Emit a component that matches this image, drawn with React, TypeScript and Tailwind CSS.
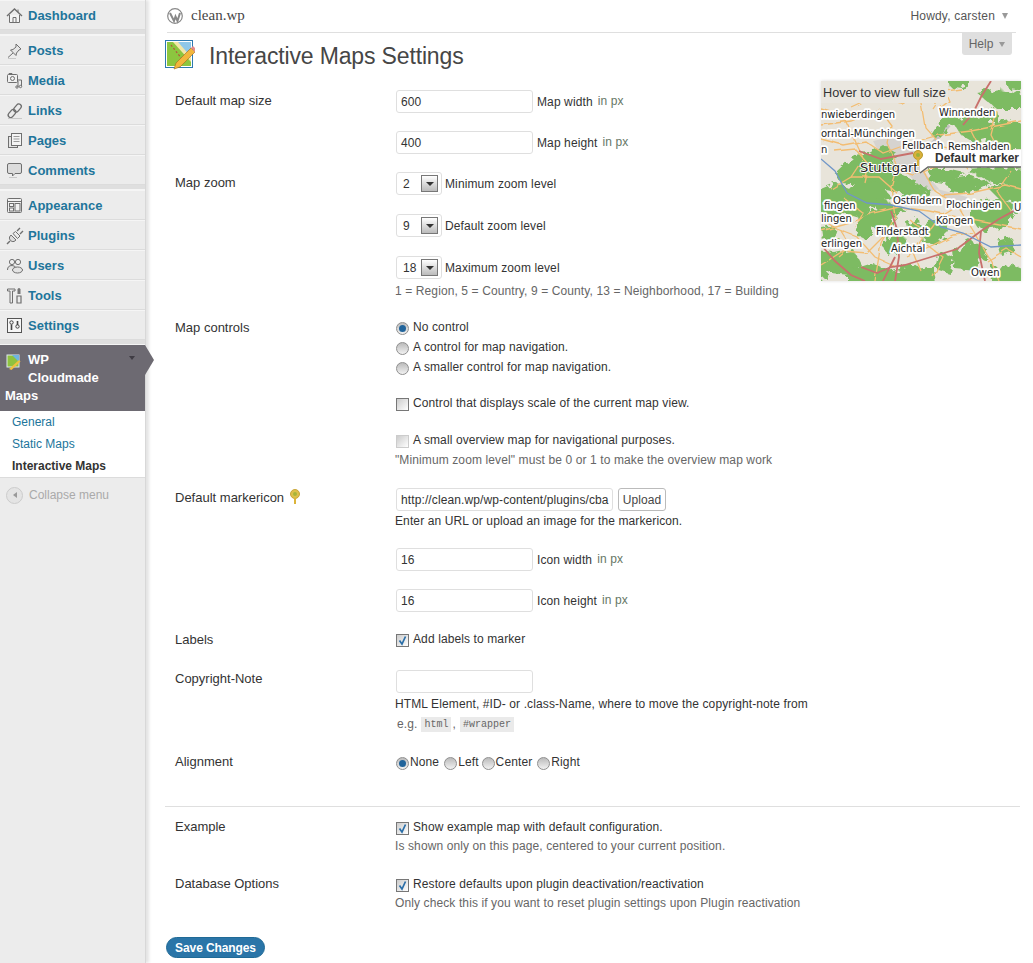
import React from 'react';

const S = { fill: 'none', stroke: '#6f6f6f', strokeWidth: 1 };

const icons: Record<string, React.ReactNode> = {
  Dashboard: (
    <>
      <path d="M1 9 L8.5 2 L16 9" {...S} strokeWidth={1.4} />
      <path d="M3.5 8 V15.5 H13.5 V8" {...S} fill="#f4f4f4" />
      <path d="M7 15.5 V10.5 H10 V15.5" {...S} />
      <path d="M12 2.5 V5" {...S} />
    </>
  ),
  Posts: (
    <>
      <path d="M10 2 L15 7 L13 8 L10.5 11 L10 13.5 L4.5 8 L7 7.5 L10 5Z" {...S} fill="#e6e6e6" />
      <path d="M7 11 L2 15.5" {...S} />
      <path d="M2 16.5 H10" stroke="#c8c8c8" fill="none" />
    </>
  ),
  Media: (
    <>
      <rect x="1.5" y="2.5" width="10" height="8" rx="1" {...S} fill="#f0f0f0" />
      <circle cx="6.5" cy="6.5" r="2" {...S} />
      <path d="M3 2.5 V1.5 H6 V2.5" {...S} />
      <path d="M12 8 H15.5 V14 M12 9 V15" {...S} />
      <circle cx="11" cy="15" r="1.2" {...S} />
      <circle cx="14.5" cy="14.5" r="1.2" {...S} />
    </>
  ),
  Links: (
    <>
      <rect x="9" y="1.5" width="5" height="9" rx="2.5" transform="rotate(40 11.5 6)" {...S} strokeWidth={1.3} />
      <rect x="3.5" y="7" width="5" height="9" rx="2.5" transform="rotate(40 6 11.5)" {...S} strokeWidth={1.3} />
      <path d="M2 16.5 H16" stroke="#c8c8c8" fill="none" />
    </>
  ),
  Pages: (
    <>
      <rect x="2.5" y="4.5" width="9" height="11" {...S} fill="#e4e4e4" />
      <rect x="5.5" y="1.5" width="10" height="12" {...S} fill="#f4f4f4" />
      <path d="M7.5 4.5 H13.5 M7.5 7 H13.5 M7.5 9.5 H13.5" stroke="#9a9a9a" fill="none" />
    </>
  ),
  Comments: (
    <>
      <path d="M3 1.5 H14 Q15.5 1.5 15.5 3 V10 Q15.5 11.5 14 11.5 H9 L6.5 14 V11.5 H3 Q1.5 11.5 1.5 10 V3 Q1.5 1.5 3 1.5Z" {...S} fill="#dcdcdc" />
      <path d="M3 15.5 H11" stroke="#c8c8c8" fill="none" />
    </>
  ),
  Appearance: (
    <>
      <rect x="1.5" y="1.5" width="14" height="14" rx="1" {...S} fill="#f2f2f2" />
      <path d="M1.5 4.5 H15.5" {...S} />
      <rect x="3.5" y="6.5" width="4" height="3" {...S} />
      <rect x="3.5" y="11" width="4" height="3" {...S} />
      <rect x="9" y="6.5" width="5" height="7.5" {...S} />
    </>
  ),
  Plugins: (
    <>
      <path d="M5 8 L10 13 L8 14.5 Q6 15 4.5 13.5 Q3 12 3.5 10Z" {...S} fill="#dcdcdc" />
      <path d="M7 6.5 L11.5 11.5 L14 9 L9.5 4.5Z" {...S} fill="#ececec" />
      <path d="M11 4 L14 1 M14 7 L17 4" {...S} strokeWidth={1.4} />
      <path d="M4 14 L1 17" {...S} strokeWidth={1.4} />
    </>
  ),
  Users: (
    <>
      <circle cx="6" cy="5" r="2.6" {...S} fill="#f0f0f0" />
      <circle cx="12" cy="5" r="2.6" {...S} fill="#f0f0f0" />
      <path d="M1.5 13 Q1.5 8.5 6 8.5 Q9 8.5 10 11" {...S} fill="#e4e4e4" />
      <ellipse cx="11.5" cy="13" rx="5" ry="3" {...S} fill="#e4e4e4" />
    </>
  ),
  Tools: (
    <>
      <path d="M1.5 2 H9 V4 H6.5 V16 H4 V4 H1.5Z" {...S} fill="#ececec" />
      <path d="M13 1.5 V7 M11 9 H15 V16 H11Z" {...S} fill="#ececec" strokeWidth={1.2} />
      <path d="M11.5 2 L13 1 L14.5 2 V7 H11.5Z" fill="#777" />
    </>
  ),
  Settings: (
    <>
      <rect x="1.5" y="1.5" width="14" height="14" {...S} stroke="#555" fill="#f6f6f6" />
      <circle cx="5.5" cy="5.5" r="1.7" {...S} stroke="#444" />
      <path d="M5.5 7.5 V13" stroke="#444" strokeWidth={1.6} fill="none" />
      <circle cx="11.5" cy="9.5" r="1.7" {...S} stroke="#444" />
      <path d="M11.5 4 V8" stroke="#444" strokeWidth={1.6} fill="none" />
    </>
  ),
};

function MenuItem({ name }: { name: string }) {
  return (
    <div className="flex h-[30px] items-center border-b border-b-[#dcdcdc] border-t border-t-[#f5f5f5] pl-[6px] pt-[1px]">
      <svg width="18" height="18" viewBox="0 0 18 18" className="shrink-0">
        {icons[name]}
      </svg>
      <span className="ml-[4px] text-[13px] font-bold text-[#21759b]">{name}</span>
    </div>
  );
}

function Separator() {
  return <div className="h-[5px] bg-[#dfdfdf] border-b border-[#f5f5f5]" />;
}

function Sidebar() {
  return (
    <div className="relative w-[146px] shrink-0 border-r border-[#d8d8d8] bg-[#ececec] shadow-[3px_0_3px_#e4e4e4]">
      <MenuItem name="Dashboard" />
      <Separator />
      {['Posts', 'Media', 'Links', 'Pages', 'Comments'].map((n) => (
        <MenuItem key={n} name={n} />
      ))}
      <Separator />
      {['Appearance', 'Plugins', 'Users', 'Tools', 'Settings'].map((n) => (
        <MenuItem key={n} name={n} />
      ))}
      <Separator />
      <div className="relative h-[66px] bg-[#6d6a72] pl-[6px] pt-[6px] text-[13px] font-bold leading-[18px] text-white">
        <div className="flex items-start">
          <svg width="16" height="16" viewBox="0 0 16 16" className="mt-[3px] shrink-0">
            <rect x="1" y="1" width="12" height="12" fill="#8fc23f" stroke="#dfe8f0" />
            <path d="M6 1h7v7z" fill="#6fb5e0" />
            <path d="M3 15l10-9 1.5 1.5-9 8.5z" fill="#f0c040" />
          </svg>
          <div className="ml-[6px]">
            WP
            <br />
            Cloudmade
          </div>
        </div>
        <div className="-ml-px">Maps</div>
        <div className="absolute right-[10px] top-[11px] h-0 w-0 border-x-[3px] border-t-[4px] border-x-transparent border-t-[#3f3c44]" />
        <div className="absolute -right-[9px] top-0 h-0 w-0 border-y-[15px] border-l-[9px] border-y-transparent border-l-[#6d6a72]" />
      </div>
      <div className="h-[66px] bg-white pl-[12px] text-[12px] leading-[22px]">
        <div className="text-[#21759b]">General</div>
        <div className="text-[#21759b]">Static Maps</div>
        <div className="font-bold text-[#333]">Interactive Maps</div>
      </div>
      <div className="flex items-center border-t border-[#dcdcdc] pl-[6px] pt-[8px] text-[12px] text-[#aaa]">
        <span className="flex h-[17px] w-[17px] items-center justify-center rounded-full border border-[#ccc] bg-[#e4e4e4]">
          <span className="h-0 w-0 border-y-[3px] border-r-[4px] border-y-transparent border-r-[#999]" />
        </span>
        <span className="ml-[6px]">Collapse menu</span>
      </div>
    </div>
  );
}

const mapLabels: [string, number, number][] = [
  ['nwieberdingen', 0, 37],
  ['orntal-Münchingen', 0, 56],
  ['Winnenden', 118, 35],
  ['Fellbach', 81, 68],
  ['Remshalden', 127, 69],
  ['n', 0, 72],
  ['Ostfildern', 72, 123],
  ['Plochingen', 125, 127],
  ['fingen', 3, 128],
  ['lingen', 0, 141],
  ['Köngen', 115, 143],
  ['Filderstadt', 55, 154],
  ['Aichtal', 70, 171],
  ['erlingen', 0, 166],
  ['Owen', 150, 195],
  ['U', 193, 130],
];

const greens = [
  'M14 92 L33 74 L48 72 L62 64 L76 72 L68 80 L80 84 L72 90 L96 100 L90 114 L60 108 L40 104 L20 102Z',
  'M-5 110 L14 102 L30 108 L38 98 L62 104 L70 118 L50 126 L42 138 L22 132 L10 136 L-5 130Z',
  'M38 134 L62 126 L76 136 L64 150 L54 148 L46 160 L34 154Z',
  'M-5 170 L14 172 L32 168 L40 184 L28 194 L10 192 L-5 205Z',
  'M26 190 L52 182 L68 190 L92 182 L110 194 L110 206 L26 206Z',
  'M60 158 L82 154 L86 168 L66 174Z',
  'M82 102 L108 106 L104 124 L82 118Z',
  'M102 144 L122 136 L126 152 L114 164 L100 160Z',
  'M132 170 L150 160 L166 168 L156 190 L134 188Z',
  'M150 120 L178 118 L198 126 L184 146 L160 150 L150 138Z',
  'M166 106 L206 100 L206 124 L180 120Z',
  'M124 98 L150 94 L170 102 L146 112 L128 110Z',
  'M106 88 L126 88 L144 92 L122 102 L108 100Z',
  'M144 88 L178 86 L206 88 L206 104 L172 102Z',
  'M172 186 L192 184 L206 190 L206 206 L170 206Z',
  'M98 188 L114 184 L116 206 L98 206Z',
  'M130 38 L150 34 L170 42 L188 38 L206 44 L206 68 L180 68 L170 58 L154 62 L140 54Z',
  'M156 12 L178 8 L206 14 L206 28 L176 28Z',
  'M184 -4 L206 -4 L206 10 L188 8Z',
  'M126 -4 L146 -4 L142 8 L128 6Z',
  'M156 28 L174 26 L176 40 L158 40Z',
  'M122 36 L132 28 L138 42 L124 50 L116 58 L110 54Z',
  'M56 116 L84 128 L74 134 L54 128Z',
  'M118 170 L134 176 L128 192 L114 188Z',
  'M176 160 L190 156 L194 170 L180 174Z',
  'M0 146 L12 144 L16 156 L2 160Z',
  'M86 142 L98 138 L100 152 L88 154Z',
];

const orange = [
  'M0 58 L22 64 L44 60 L62 72 L90 62 L118 54 L150 50 L200 40',
  'M0 28 L22 34 L30 52 L42 78 L30 96 L10 108',
  'M58 28 L70 44 L66 62 L76 84 L70 106 L74 136 L60 162 L54 200',
  'M94 0 L100 22 L104 46 L122 66 L150 72 L200 78',
  'M102 90 L114 110 L136 124 L152 150 L170 180 L178 200',
  'M0 150 L30 142 L52 132 L78 126 L108 130 L146 138 L200 148',
  'M0 138 L16 148 L36 156 L54 176 L72 184',
  'M112 28 L124 10 L140 8',
  'M176 30 L170 54 L184 82',
  'M30 26 L52 16 L80 22 L100 12',
  'M0 184 L22 170 L46 172 L62 156',
  'M86 176 L112 164 L132 154 L152 152',
  'M120 114 L150 112 L184 104 L200 108',
  'M74 88 L92 94 L106 88 L126 84',
  'M14 70 L34 68 L48 84 L44 102',
  'M166 180 L186 168 L200 176',
  'M112 196 L122 176 L106 164',
  'M24 118 L42 132 L34 148',
  'M120 0 L128 20 L118 28',
  'M0 44 L30 40 L56 30',
  'M150 50 L160 70 L146 88',
  'M30 96 L58 96 L76 112',
  'M90 140 L104 150 L92 170 L100 190',
  'M136 124 L120 134 L110 148',
  'M190 90 L176 110 L190 130',
  'M20 150 L30 166 L18 176',
];

const red = [
  'M170 0 L160 16 L152 32 L142 44',
  'M0 164 L14 180 L30 194 L44 200',
  'M70 130 L76 148 L78 176 L74 200',
  'M84 184 L110 176 L136 168 L160 150 L178 138 L200 126',
  'M40 186 L56 192 L70 186 L84 184',
  'M160 150 L158 172 L164 200',
  'M38 70 L60 78 L92 72',
  'M74 176 L62 200',
];

const blue = 'M0 78 L14 90 L26 112 L46 122 L70 124 L98 130 L120 146 L142 152 L170 166 L200 164';

function MapPreview() {
  return (
    <div className="float-right -mr-[1px] mt-[7px] h-[200px] w-[200px] bg-[#e8e4da] shadow-[0_0_3px_#ddd]">
      <svg width="200" height="200" viewBox="0 0 200 200" fontFamily="'DejaVu Sans', sans-serif">
        <defs>
          <filter id="rough" x="-5%" y="-5%" width="110%" height="110%">
            <feTurbulence type="fractalNoise" baseFrequency="0.16" numOctaves="2" seed="7" />
            <feDisplacementMap in="SourceGraphic" scale="11" />
          </filter>
          <filter id="wiggle" x="-5%" y="-5%" width="110%" height="110%">
            <feTurbulence type="fractalNoise" baseFrequency="0.09" numOctaves="1" seed="3" />
            <feDisplacementMap in="SourceGraphic" scale="5" />
          </filter>
        </defs>
        <rect width="200" height="200" fill="#e8e4da" />
        <path d="M52 60 L80 54 L96 70 L104 92 L118 108 L104 112 L86 92 L60 76Z" fill="#d6d3cf" />
        <path d="M116 108 L146 116 L150 128 L128 122Z" fill="#d6d3cf" />
        <path d="M128 44 L112 62 L104 68" fill="none" stroke="#c4c2c0" strokeWidth="4" />
        <g fill="#7dbb62" filter="url(#rough)">
          {greens.map((d) => (
            <path key={d} d={d} />
          ))}
        </g>
        <g fill="none" stroke="#f3bd72" strokeWidth="1.3" filter="url(#wiggle)">
          {orange.map((d) => (
            <path key={d} d={d} />
          ))}
        </g>
        <g fill="none" stroke="#c8706c" strokeWidth="1.8">
          {red.map((d) => (
            <path key={d} d={d} />
          ))}
        </g>
        <path d={blue} fill="none" stroke="#7096c8" strokeWidth="1.3" />
        <g fontSize="10" fill="#222">
          {mapLabels.map(([text, x, y]) => (
            <text key={text} x={x} y={y} stroke="#fff" strokeWidth="3.5" paintOrder="stroke" strokeLinejoin="round">
              {text}
            </text>
          ))}
          <text x="39" y="91" fontSize="13" stroke="#fff" strokeWidth="2" paintOrder="stroke" strokeLinejoin="round">
            Stuttgart
          </text>
        </g>
        <rect x="0" y="0" width="127" height="22" fill="#eae7e0" />
        <text x="2" y="16" fontSize="12.7" fontFamily="'Liberation Sans', sans-serif" fill="#333">
          Hover to view full size
        </text>
        <path d="M99 69 H200 V86 H107 L99 92Z" fill="#fff" />
        <path d="M99 92 L107 86 H200" fill="none" stroke="#666" strokeWidth="1.5" />
        <text x="114" y="81" fontSize="12" fontWeight="bold" fontFamily="'Liberation Sans', sans-serif" fill="#333">
          Default marker
        </text>
        <g transform="translate(92 69)">
          <circle cx="5" cy="5" r="4.5" fill="#d9b13a" stroke="#b79a2c" />
          <circle cx="5" cy="5" r="2" fill="#9bb13a" />
          <rect x="4" y="9" width="2" height="7" fill="#d9b13a" />
        </g>
      </svg>
    </div>
  );
}

function TextInput({ value, wide = false }: { value: string; wide?: boolean }) {
  return (
    <div
      className={`flex h-[23px] items-center overflow-hidden whitespace-nowrap rounded-[3px] border border-[#dfdfdf] bg-white pl-[4px] text-[12px] text-[#333] ${
        wide ? 'w-[217px]' : 'w-[137px]'
      }`}
    >
      {value}
    </div>
  );
}

function Select({ value }: { value: string }) {
  return (
    <div className="flex h-[23px] w-[46px] items-center justify-between rounded-[3px] border border-[#dfdfdf] bg-white pl-[6px] pr-[3px] text-[12px] text-[#333]">
      <span>{value}</span>
      <span className="flex h-[17px] w-[17px] items-center justify-center border border-[#777] bg-gradient-to-b from-white to-[#bbb]">
        <span className="h-0 w-0 border-x-[4px] border-t-[4px] border-x-transparent border-t-[#333]" />
      </span>
    </div>
  );
}

function Radio({ checked = false }: { checked?: boolean }) {
  return (
    <span className="mt-[2px] flex h-[13px] w-[13px] shrink-0 items-center justify-center rounded-full border border-[#8f8f8f] bg-gradient-to-b from-[#bbb] to-[#f2f2f2]">
      {checked && <span className="h-[7px] w-[7px] rounded-full bg-[#21649b]" />}
    </span>
  );
}

function Checkbox({ checked = false, light = false }: { checked?: boolean; light?: boolean }) {
  return (
    <span
      className={`mt-[2px] flex h-[13px] w-[13px] shrink-0 items-center justify-center border bg-gradient-to-br from-[#ccc] to-white ${
        light ? 'border-[#ccc]' : 'border-[#777]'
      }`}
    >
      {checked && (
        <svg width="11" height="11" viewBox="0 0 11 11">
          <path d="M2.5 5.5 L5 9 L8.5 1.5" fill="none" stroke="#2a6ea8" strokeWidth="1.7" />
        </svg>
      )}
    </span>
  );
}

function Row({
  label,
  className,
  labelClass = '',
  children,
}: {
  label: React.ReactNode;
  className: string;
  labelClass?: string;
  children: React.ReactNode;
}) {
  return (
    <div className={`flex ${className}`}>
      <div className={`w-[230px] shrink-0 pl-[10px] text-[13px] leading-[16px] text-[#333] ${labelClass}`}>{label}</div>
      <div className="text-[12px] tracking-[0.11px] text-[#333]">{children}</div>
    </div>
  );
}

function Suffix({ text, hint, tight = false }: { text: string; hint?: string; tight?: boolean }) {
  return (
    <span className={`text-[12px] text-[#333] ${tight ? 'ml-[3px]' : 'ml-[4px]'}`}>
      {text}
      {hint && <span className="relative -top-px ml-[5px] text-[#667766]">{hint}</span>}
    </span>
  );
}

export default function App() {
  return (
    <div className="flex min-h-[963px] bg-white font-['Liberation_Sans',sans-serif] text-[12px]">
      <Sidebar />
      <div className="relative w-[874px] pl-[19px]">
        <div className="ml-[2px] mr-[4px] flex h-[33px] items-center justify-between border-b border-[#dfdfdf]">
          <div className="flex items-center">
            <svg width="16" height="16" viewBox="0 0 16 16">
              <circle cx="8" cy="8" r="7.3" fill="none" stroke="#888" strokeWidth="1.2" />
              <path d="M3 5 L7 13 L8.5 8.5 L10.5 13 L13 5" fill="none" stroke="#888" strokeWidth="2" />
            </svg>
            <span className="mb-[2px] ml-[8px] font-['Liberation_Serif',serif] text-[15px] text-[#464646]">clean.wp</span>
          </div>
          <div className="flex items-center pr-[8px] text-[12px] tracking-[0.2px] text-[#555]">
            Howdy, carsten
            <span className="ml-[7px] h-0 w-0 border-x-[3.5px] border-t-[6px] border-x-transparent border-t-[#999]" />
          </div>
        </div>
        <div className="absolute right-[8px] top-[33px] flex h-[22px] w-[50px] items-center justify-center rounded-b-[3px] bg-[#dfdfdf] text-[12px] text-[#666]">
          Help
          <span className="ml-[6px] h-0 w-0 border-x-[3px] border-t-[5px] border-x-transparent border-t-[#999]" />
        </div>
        <div className="flex h-[41px] items-center pt-[5px]">
          <svg width="30" height="30" viewBox="0 0 30 30" className="-mt-[3px]">
            <rect x="0.5" y="0.5" width="27" height="27" fill="#fff" stroke="#2d7ab0" />
            <rect x="2" y="2" width="24" height="24" fill="#8cc63f" />
            <path d="M10 2 H26 V20Z" fill="#8fc7e8" />
            <path d="M8 2 H13 L26 17 V22Z" fill="#f2e6a8" />
            <path d="M6 5 L17 19" fill="none" stroke="#b5533c" strokeWidth="1.2" strokeDasharray="2 2" />
            <path d="M9 29 L11 23 L26 8 L30 12 L15 27Z" fill="#f2b63c" stroke="#a06a20" strokeWidth="0.6" />
            <path d="M26 8 L28 6 L31 9 L30 12Z" fill="#e58a8a" />
          </svg>
          <h1 className="ml-[14px] text-[23px] font-normal tracking-[-0.15px] text-[#464646]">Interactive Maps Settings</h1>
        </div>
        <MapPreview />
        <Row label="Default map size" className="pt-[16px]" labelClass="pt-[3px]">
          <div className="flex items-center pl-[1px]">
            <TextInput value="600" />
            <Suffix text="Map width" hint="in px" />
          </div>
          <div className="mt-[18px] flex items-center pl-[1px]">
            <TextInput value="400" />
            <Suffix text="Map height" hint="in px" />
          </div>
        </Row>
        <Row label="Map zoom" className="mt-[18px]" labelClass="pt-[3px]">
          <div className="flex items-center pl-[1px]">
            <Select value="2" />
            <Suffix tight text="Minimum zoom level" />
          </div>
          <div className="mt-[19px] flex items-center pl-[1px]">
            <Select value="9" />
            <Suffix tight text="Default zoom level" />
          </div>
          <div className="mt-[19px] flex items-center pl-[1px]">
            <Select value="18" />
            <Suffix tight text="Maximum zoom level" />
          </div>
          <div className="mt-[3px] text-[#666]">1 = Region, 5 = Country, 9 = County, 13 = Neighborhood, 17 = Building</div>
        </Row>
        <Row label="Map controls" className="mt-[17px]" labelClass="pt-[3px]">
          <div className="flex h-[20px] items-center gap-[4px] pl-[1px]">
            <Radio checked /> No control
          </div>
          <div className="flex h-[20px] items-center gap-[4px] pl-[1px]">
            <Radio /> A control for map navigation.
          </div>
          <div className="flex h-[20px] items-center gap-[4px] pl-[1px]">
            <Radio /> A smaller control for map navigation.
          </div>
          <div className="mt-[16px] flex h-[20px] items-center gap-[4px] pl-[1px]">
            <Checkbox /> Control that displays scale of the current map view.
          </div>
          <div className="mt-[17px] flex h-[20px] items-center gap-[4px] pl-[1px]">
            <Checkbox light /> A small overview map for navigational purposes.
          </div>
          <div className="mt-[1px] text-[#666]">"Minimum zoom level" must be 0 or 1 to make the overview map work</div>
        </Row>
        <Row
          label={
            <span className="flex items-center">
              Default markericon
              <svg width="12" height="16" viewBox="0 0 12 16" className="-mt-[3px] ml-[5px]">
                <circle cx="6" cy="5" r="4.5" fill="#dcc04a" stroke="#c9a63a" />
                <circle cx="6" cy="5" r="2" fill="#a8b43a" />
                <rect x="5" y="9" width="2" height="6" fill="#dcb43a" />
              </svg>
            </span>
          }
          className="mt-[19px]"
          labelClass="pt-[2px]"
        >
          <div className="flex items-center gap-[5px] pl-[1px]">
            <TextInput value="http://clean.wp/wp-content/plugins/cba" wide />
            <div className="flex h-[23px] w-[48px] items-center justify-center rounded-[3px] border border-[#bbb] bg-white text-[#464646]">
              Upload
            </div>
          </div>
          <div className="mt-[3px] leading-[15px]">Enter an URL or upload an image for the markericon.</div>
          <div className="mt-[19px] flex items-center pl-[1px]">
            <TextInput value="16" />
            <Suffix text="Icon width" hint="in px" />
          </div>
          <div className="mt-[18px] flex items-center pl-[1px]">
            <TextInput value="16" />
            <Suffix text="Icon height" hint="in px" />
          </div>
        </Row>
        <Row label="Labels" className="mt-[19px]" labelClass="pt-[1px]">
          <div className="flex h-[16px] items-center gap-[4px] pl-[1px]">
            <Checkbox checked /> Add labels to marker
          </div>
        </Row>
        <Row label="Copyright-Note" className="mt-[22px]" labelClass="pt-[1px]">
          <div className="pl-[1px]">
            <TextInput value="" />
          </div>
          <div className="mt-[4px] leading-[15px]">HTML Element, #ID- or .class-Name, where to move the copyright-note from</div>
          <div className="mt-[3px] flex items-center pl-[2px] text-[#666]">
            e.g.
            <code className="ml-[4px] flex h-[15px] items-center bg-[#eaeaea] px-[3px] font-['Liberation_Mono',monospace] text-[10px] tracking-normal">html</code>
            <span className="mx-[1px]">,</span>
            <code className="ml-[3px] flex h-[15px] items-center bg-[#eaeaea] px-[3px] font-['Liberation_Mono',monospace] text-[10px] tracking-normal">#wrapper</code>
          </div>
        </Row>
        <Row label="Alignment" className="mt-[21px]">
          <div className="flex h-[16px] items-center pl-[1px]">
            <Radio checked />
            <span className="ml-[1px] mr-[5px]">None</span>
            <Radio />
            <span className="ml-[1px] mr-[3px]">Left</span>
            <Radio />
            <span className="ml-[1px] mr-[5px]">Center</span>
            <Radio />
            <span className="ml-[1px]">Right</span>
          </div>
        </Row>
        <div className="mt-[36px] h-px bg-[#dfdfdf]" />
        <Row label="Example" className="mt-[12px]">
          <div className="flex h-[16px] items-center gap-[4px] pl-[1px]">
            <Checkbox checked /> Show example map with default configuration.
          </div>
          <div className="mt-[2px] text-[#666]">Is shown only on this page, centered to your current position.</div>
        </Row>
        <Row label="Database Options" className="mt-[21px]">
          <div className="flex h-[16px] items-center gap-[4px] pl-[1px]">
            <Checkbox checked /> Restore defaults upon plugin deactivation/reactivation
          </div>
          <div className="mt-[2px] text-[#666]">Only check this if you want to reset plugin settings upon Plugin reactivation</div>
        </Row>
        <div className="ml-[1px] mt-[25px] flex h-[21px] w-[99px] items-center justify-center rounded-full border border-[#1f6a96] bg-[#2a75a8] text-[12px] font-bold tracking-[-0.1px] text-white">
          Save Changes
        </div>
      </div>
    </div>
  );
}
